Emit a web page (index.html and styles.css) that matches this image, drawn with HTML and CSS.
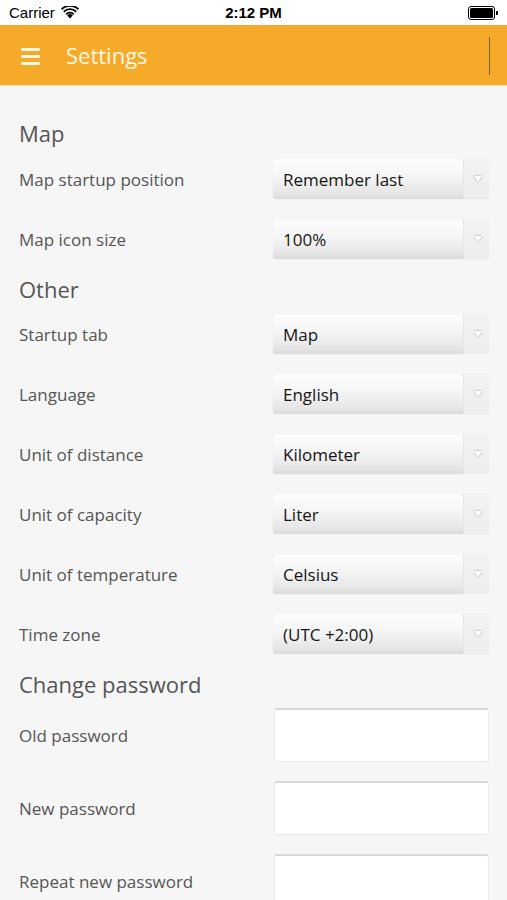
FILE: index.html
```html
<!DOCTYPE html>
<html>
<head>
<meta charset="utf-8">
<link rel="stylesheet" href="styles.css">
</head>
<body>
<div class="status">
  <div class="status-left">
    <span class="carrier">Carrier</span>
    <svg class="wifi" width="18" height="13" viewBox="0 0 18 13">
      <path d="M9 12.5 L6.2 9.4 A4 4 0 0 1 11.8 9.4 Z" fill="#000"/>
      <path d="M4.6 7.6 A6.4 6.4 0 0 1 13.4 7.6 L12.2 8.9 A4.6 4.6 0 0 0 5.8 8.9 Z" fill="#000"/>
      <path d="M2.2 5.1 A9.8 9.8 0 0 1 15.8 5.1 L14.6 6.4 A8 8 0 0 0 3.4 6.4 Z" fill="#000"/>
      <path d="M0 2.6 A13 13 0 0 1 18 2.6 L16.8 3.9 A11.2 11.2 0 0 0 1.2 3.9 Z" fill="#000"/>
    </svg>
  </div>
  <div class="time">2:12 PM</div>
  <div class="status-right">
    <div class="battery"><div class="battery-fill"></div></div><div class="battery-tip"></div>
  </div>
</div>
<header class="appbar">
  <div class="burger"><span></span><span></span><span></span></div>
  <div class="title">Settings</div>
  <div class="divider"></div>
</header>
<main class="content">
  <h2 class="section">Map</h2>
  <div class="row"><div class="label">Map startup position</div><div class="select"><span class="value">Remember last</span><span class="arrow"><i></i></span></div></div>
  <div class="row"><div class="label">Map icon size</div><div class="select"><span class="value">100%</span><span class="arrow"><i></i></span></div></div>
  <h2 class="section">Other</h2>
  <div class="row"><div class="label">Startup tab</div><div class="select"><span class="value">Map</span><span class="arrow"><i></i></span></div></div>
  <div class="row"><div class="label">Language</div><div class="select"><span class="value">English</span><span class="arrow"><i></i></span></div></div>
  <div class="row"><div class="label">Unit of distance</div><div class="select"><span class="value">Kilometer</span><span class="arrow"><i></i></span></div></div>
  <div class="row"><div class="label">Unit of capacity</div><div class="select"><span class="value">Liter</span><span class="arrow"><i></i></span></div></div>
  <div class="row"><div class="label">Unit of temperature</div><div class="select"><span class="value">Celsius</span><span class="arrow"><i></i></span></div></div>
  <div class="row"><div class="label">Time zone</div><div class="select"><span class="value">(UTC +2:00)</span><span class="arrow"><i></i></span></div></div>
  <h2 class="section">Change password</h2>
  <div class="prow"><div class="label">Old password</div><div class="input"></div></div>
  <div class="prow"><div class="label">New password</div><div class="input"></div></div>
  <div class="prow"><div class="label">Repeat new password</div><div class="input"></div></div>
</main>
</body>
</html>
```
FILE: styles.css
```css
html, body {
  margin: 0;
  padding: 0;
  background: #f6f6f6;
  height: 900px;
  overflow: hidden;
}
body {
  font-family: "Open Sans", "Noto Sans", sans-serif;
}
.status {
  height: 25px;
  background: #fff;
  display: flex;
  align-items: center;
  justify-content: space-between;
  padding: 0 9px 0 9px;
  font-family: "Liberation Sans", Arial, sans-serif;
  font-size: 15px;
  color: #000;
}
.status-left {
  display: flex;
  align-items: center;
  gap: 6px;
  width: 120px;
}
.wifi { margin-top: -1px; }
.time {
  font-weight: bold;
  font-size: 15px;
}
.status-right {
  width: 120px;
  display: flex;
  justify-content: flex-end;
  align-items: center;
}
.battery {
  width: 23px;
  height: 10px;
  border: 1px solid #000;
  border-radius: 3px;
  padding: 1px;
  box-sizing: content-box;
}
.battery-fill {
  width: 100%;
  height: 100%;
  background: #000;
  border-radius: 1.5px;
}
.battery-tip {
  width: 1.5px;
  height: 4px;
  background: #000;
  margin-left: 1px;
  border-radius: 0 1px 1px 0;
}
.appbar {
  height: 61px;
  background: #f5aa2a;
  display: flex;
  align-items: center;
  border-bottom: 1px solid #f7e2bd;
  box-sizing: border-box;
}
.burger {
  width: 19px;
  margin-left: 21px;
  display: flex;
  flex-direction: column;
  gap: 4px;
  margin-top: 2px;
}
.burger span {
  display: block;
  height: 3px;
  background: #fff6e6;
  border-radius: 1px;
}
.title {
  margin-left: 26px;
  font-size: 22px;
  color: #fff6e4;
  font-weight: 400;
  flex: 1;
}
.divider {
  width: 1.5px;
  height: 38px;
  background: #7d5d24;
  margin-right: 17px;
  margin-top: 1px;
}
.content {
  padding: 27px 18px 0 19px;
}
.section {
  margin: 0;
  padding-top: 5px;
  height: 35px;
  line-height: 31px;
  font-size: 22px;
  font-weight: 400;
  color: #555;
  box-sizing: border-box;
}
.content > .section:first-child {
  height: 36px;
}
.row {
  height: 60px;
  display: flex;
  align-items: center;
  justify-content: space-between;
}
.label {
  font-size: 17px;
  color: #555;
}
.select {
  width: 216px;
  height: 40px;
  display: flex;
  border-radius: 3px;
  overflow: hidden;
  box-shadow: 0 0 1px rgba(0,0,0,0.15);
  background: #eeeeee;
}
.select .value {
  flex: 1;
  display: flex;
  align-items: center;
  padding-left: 10px;
  font-size: 17px;
  color: #151515;
  background: linear-gradient(#fdfdfd 0%, #f5f5f5 45%, #e6e6e6 85%, #dadada 100%);
  border-right: 1px solid #e6e6e6;
}
.select .arrow {
  width: 25px;
  display: flex;
  align-items: center;
  justify-content: center;
  background: linear-gradient(#f3f3f3, #ededed);
}
.select .arrow i {
  display: block;
  width: 0;
  height: 0;
  border-left: 4px solid transparent;
  border-right: 4px solid transparent;
  border-top: 6px solid #ffffff;
  filter: drop-shadow(0 0 0.8px #999);
  margin-left: 3px;
}
.prow {
  height: 73px;
  display: flex;
  align-items: center;
  justify-content: space-between;
}
.input {
  width: 215px;
  height: 54px;
  background: #fff;
  border: 1px solid #ebebeb;
  border-top: 2px solid #d9d9d9;
  border-radius: 3px;
  box-sizing: border-box;
  margin-top: -1px;
}
```
